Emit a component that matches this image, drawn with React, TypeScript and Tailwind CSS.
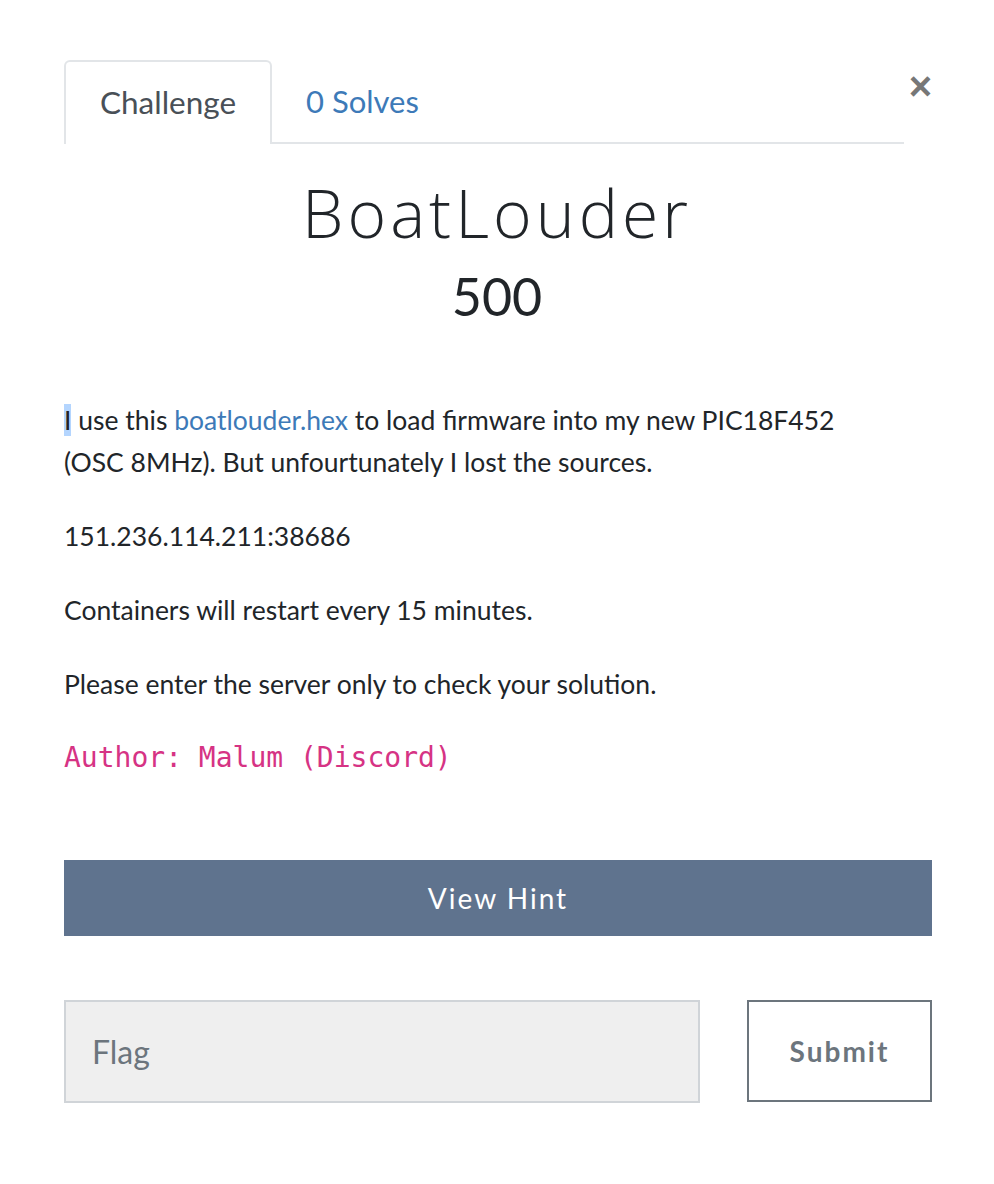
import React from "react";

export default function App() {
  return (
    <div className="w-[994px] h-[1184px] bg-white text-[#212529]" style={{ fontFamily: "Lato, 'Liberation Sans', sans-serif" }}>
      <div className="px-[64px] pt-[60px] relative">
        <button className="absolute right-[62px] top-[66px] text-[#777] text-[40px] font-bold leading-none" style={{ fontFamily: "'Liberation Sans', Arial, sans-serif" }}>×</button>
        <div className="flex w-[840px] border-b-2 border-[#e2e5e8] h-[84px]">
          <div className="h-[84px] w-[208px] border-2 border-b-0 border-[#e2e5e8] rounded-t-[6px] bg-white flex items-center justify-center text-[31.5px] text-[#495057] -mb-[2px]">
            Challenge
          </div>
          <div className="h-[82px] px-[34px] flex items-center text-[31px] text-[#3d7ab8]">0 Solves</div>
        </div>
        <div className="flex flex-col items-center pt-[28px]">
          <h1 className="text-[66px] leading-[80px] tracking-[4px] text-[#212529]" style={{ fontFamily: "'Open Sans', Lato, sans-serif", fontWeight: 300 }}>BoatLouder</h1>
          <h3 className="text-[52px] leading-[64px] mt-[12px] text-[#212529]">500</h3>
        </div>
        <div className="mt-[71px] text-[26.5px] leading-[42px]">
          <p className="w-[820px]">
            <span className="bg-[#b4d5fe]">I</span> use this <span className="text-[#3d7ab8]">boatlouder.hex</span> to load firmware into my new PIC18F452 (OSC 8MHz). But unfourtunately I lost the sources.
          </p>
          <p className="mt-[32px]">151.236.114.211:38686</p>
          <p className="mt-[32px]">Containers will restart every 15 minutes.</p>
          <p className="mt-[32px]">Please enter the server only to check your solution.</p>
          <p className="mt-[32px] text-[#d63384] text-[28px]" style={{ fontFamily: "'DejaVu Sans Mono', monospace" }}>Author: Malum (Discord)</p>
        </div>
        <button className="mt-[81px] w-[868px] h-[76px] bg-[#5f738e] text-white text-[28px] tracking-[2px] flex items-center justify-center">View Hint</button>
        <div className="mt-[64px] flex gap-[47px] w-[868px]">
          <div className="w-[636px] h-[103px] bg-[#efefef] border-2 border-[#d0d4d8] flex items-center px-[26px] text-[32px] text-[#6c757d]">Flag</div>
          <button className="flex-1 h-[102px] border-2 border-[#6c757d] text-[#6c757d] text-[28px] font-bold tracking-[2px] flex items-center justify-center">Submit</button>
        </div>
      </div>
    </div>
  );
}
